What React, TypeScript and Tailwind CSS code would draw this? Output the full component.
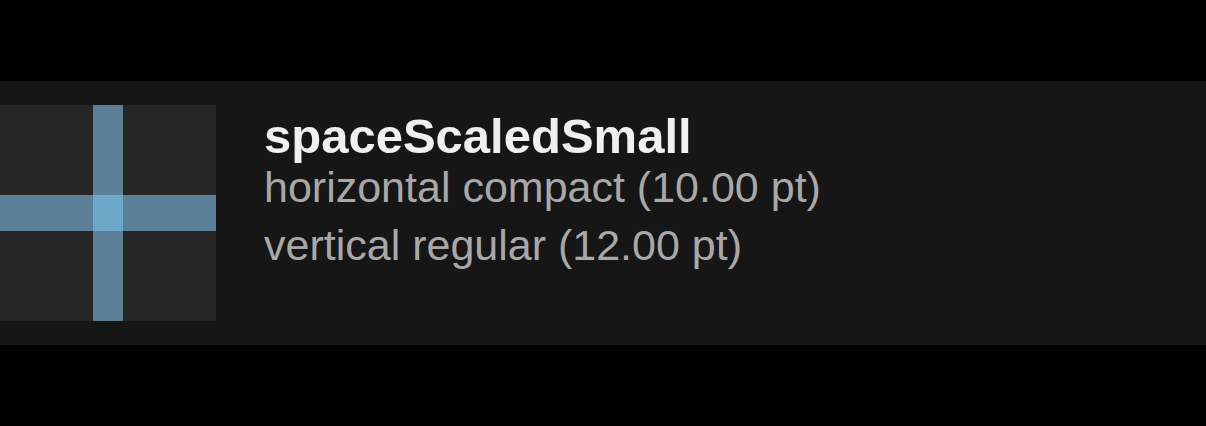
export default function App() {
  return (
    <div className="w-[1206px] h-[426px] bg-black pt-[81px]" style={{ fontFamily: '"Liberation Sans", Arial, sans-serif' }}>
      <div className="flex items-start gap-[48px] bg-[#161616] py-6">
        {/* spacing preview */}
        <svg width="216" height="216" viewBox="0 0 216 216" className="shrink-0 block">
          <rect x="0" y="0" width="216" height="216" fill="#262626" />
          <rect x="93" y="0" width="30" height="216" fill="#5a7f96" />
          <rect x="0" y="90" width="216" height="36" fill="#5a7f96" />
          <rect x="93" y="90" width="30" height="36" fill="#6ea8c8" />
        </svg>
        <div className="flex flex-col pt-[9px]">
          <p className="text-[49px] leading-[44px] font-bold text-[#f0f0f0]">spaceScaledSmall</p>
          <p className="text-[43px] leading-[58px] text-[#a8a8a8]">horizontal compact (10.00 pt)</p>
          <p className="text-[43px] leading-[58px] text-[#a8a8a8]">vertical regular (12.00 pt)</p>
        </div>
      </div>
    </div>
  );
}
